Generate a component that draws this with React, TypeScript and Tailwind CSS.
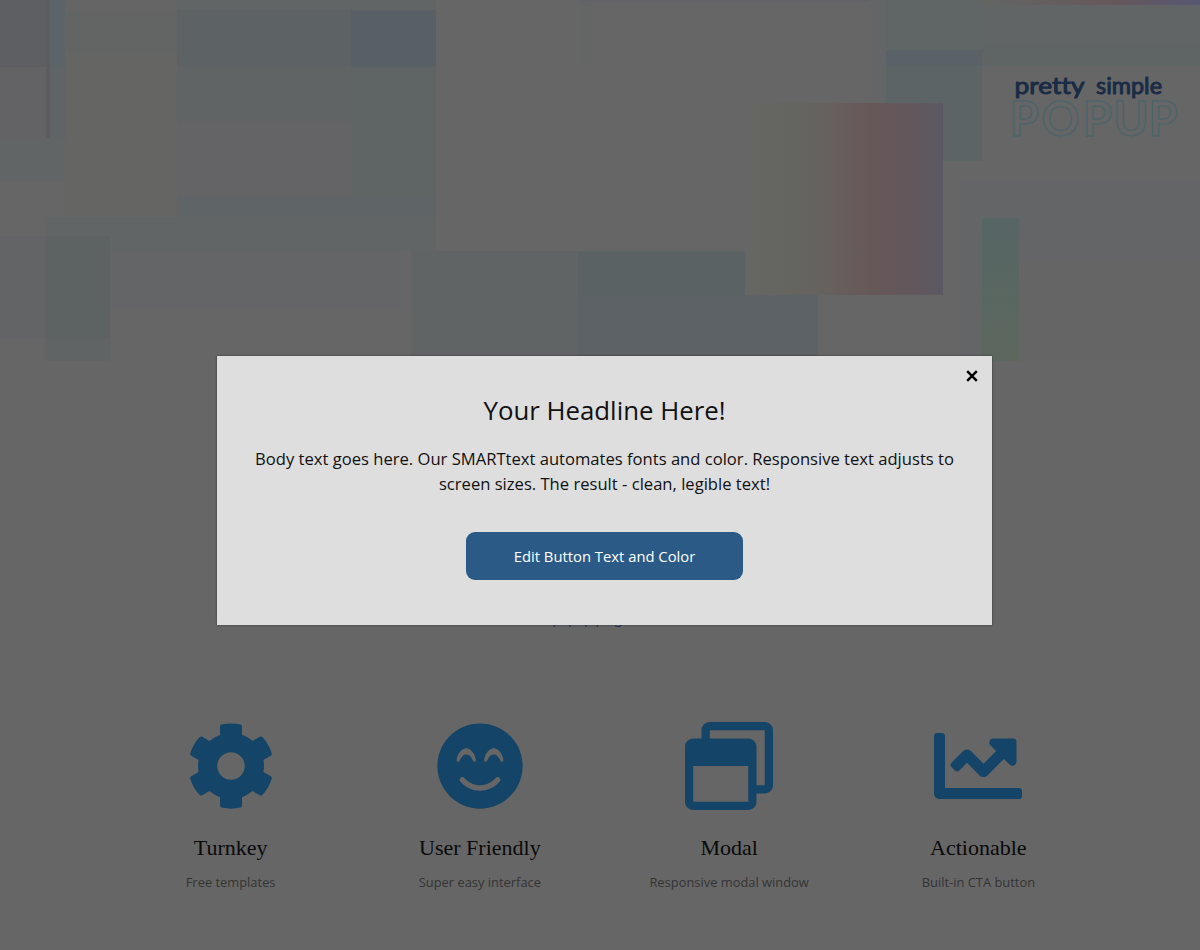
import { FaCog, FaSmileBeam, FaRegWindowRestore, FaChartLine } from "react-icons/fa";

const features = [
  { Icon: FaCog, title: "Turnkey", text: "Free templates" },
  { Icon: FaSmileBeam, title: "User Friendly", text: "Super easy interface" },
  { Icon: FaRegWindowRestore, title: "Modal", text: "Responsive modal window" },
  { Icon: FaChartLine, title: "Actionable", text: "Built-in CTA button" },
];

const patches: [number, number, number, number, string][] = [
  [0, 0, 50, 67, "#5d5f62"], [0, 67, 50, 72, "#636264"], [0, 139, 65, 42, "#626566"],
  [50, 0, 15, 67, "#5b6468"], [50, 67, 15, 72, "#606466"],
  [65, 0, 112, 12, "#656565"], [65, 12, 112, 42, "#636564"], [65, 54, 112, 162, "#656664"],
  [177, 0, 259, 10, "#626565"], [177, 10, 174, 57, "#5d6365"], [177, 67, 174, 55, "#616465"], [177, 122, 174, 74, "#646466"],
  [351, 10, 85, 57, "#586066"], [351, 67, 85, 129, "#5f6465"],
  [177, 196, 259, 21, "#5f6466"], [45, 217, 391, 34, "#626565"], [110, 251, 291, 58, "#646566"],
  [0, 236, 45, 103, "#626465"], [45, 236, 65, 103, "#5c6362"], [45, 339, 65, 22, "#606465"],
  [411, 251, 167, 110, "#606465"], [578, 251, 167, 44, "#5b6263"], [578, 295, 240, 66, "#5c6265"],
  [580, 2, 10, 64, "#646666"], [580, 0, 290, 2, "#606466"],
  [870, 0, 16, 103, "#636566"], [886, 0, 96, 50, "#606566"], [886, 50, 96, 16, "#5a6267"], [886, 66, 96, 95, "#5d6466"],
  [982, 5, 218, 37, "#626565"], [982, 42, 218, 24, "#5f6465"],
  [960, 180, 22, 181, "#646566"], [982, 180, 218, 81, "#646566"], [1020, 261, 180, 100, "#656566"],
];

export default function App() {
  return (
    <div className="relative h-[950px] w-[1200px] overflow-hidden bg-[#666666] font-['Open_Sans','Noto_Sans',sans-serif]">
      <svg className="absolute inset-0" width="1200" height="361" viewBox="0 0 1200 361">
        <defs>
          <linearGradient id="rainbow">
            <stop offset="0" stopColor="#666663" />
            <stop offset="0.2" stopColor="#646560" />
            <stop offset="0.38" stopColor="#66625f" />
            <stop offset="0.62" stopColor="#675858" />
            <stop offset="0.82" stopColor="#63575c" />
            <stop offset="1" stopColor="#5b5863" />
          </linearGradient>
          <linearGradient id="ribbon">
            <stop offset="0" stopColor="#626662" />
            <stop offset="0.6" stopColor="#67575b" />
            <stop offset="1" stopColor="#555773" />
          </linearGradient>
          <linearGradient id="green" x2="0" y2="1">
            <stop offset="0" stopColor="#566665" />
            <stop offset="1" stopColor="#5d675e" />
          </linearGradient>
        </defs>
        {patches.map(([x, y, w, h, fill]) => (
          <rect key={`${x}-${y}`} x={x} y={y} width={w} height={h} fill={fill} />
        ))}
        <rect x="46" y="0" width="4" height="138" fill="#5f5c5f" />
        <rect x="745" y="251" width="5" height="44" fill="#656665" />
        <rect x="750" y="103" width="193" height="192" fill="url(#rainbow)" />
        <rect x="982" y="0" width="218" height="5" fill="url(#ribbon)" />
        <rect x="982" y="218" width="37" height="143" fill="url(#green)" />
      </svg>

      <svg className="absolute left-[1005px] top-[66px] overflow-visible" width="190" height="80" viewBox="0 0 190 80">
        <g fill="none" stroke="#4c646a" strokeWidth="1.4" className="font-['Lato'] text-[47px] font-bold">
          <text x="4.8 36.5 77.8 108.5 143.6" y="69.8">POPUP</text>
        </g>
        <g fill="#192b45" stroke="#192b45" strokeWidth="0.9" strokeLinejoin="round" className="font-['Lato'] text-[22.5px] font-normal [font-variant-ligatures:none]">
          <text x="9.5" y="27.6" textLength="70" lengthAdjust="spacingAndGlyphs">pretty</text>
          <text x="91" y="27.6" textLength="66" lengthAdjust="spacingAndGlyphs">simple</text>
        </g>
      </svg>

      <p className="absolute left-[474px] top-[609px] w-[244px] whitespace-nowrap text-center text-[13px] leading-[20px] text-[#333333]">
        Get the <span className="text-[#1b2560]">free popup plugin</span> from our site
      </p>

      <div className="absolute left-[106px] top-[722px] grid w-[997px] grid-cols-4">
        {features.map(({ Icon, title, text }) => (
          <div key={title} className="flex flex-col items-center">
            <Icon size={88} className="text-[#144467]" />
            <h2 className="mt-[22px] font-['Liberation_Serif',serif] text-[22px] leading-[32px] text-[#0a0a0a]">{title}</h2>
            <p className="mt-[9px] text-[12.9px] leading-[18px] text-[#343434]">{text}</p>
          </div>
        ))}
      </div>

      <section role="dialog" className="absolute left-[217px] top-[356px] flex h-[269px] w-[775px] flex-col items-center bg-[#dedede] text-[#111111] shadow-[0_0_2px_#333333]">
        <button aria-label="Close" className="absolute right-[14px] top-[14px]">
          <svg width="12" height="12" viewBox="0 0 12 12" stroke="#000000" strokeWidth="2.4" fill="none">
            <path d="M1.2 1.2 10.8 10.8M10.8 1.2 1.2 10.8" />
          </svg>
        </button>
        <h1 className="mt-[36px] text-[25.8px] leading-[36px]">Your Headline Here!</h1>
        <p className="mt-[18px] w-[715px] whitespace-nowrap text-center text-[16.6px] leading-[25px]">
          Body text goes here. Our SMARTtext automates fonts and color. Responsive text adjusts to
          <br />
          screen sizes. The result - clean, legible text!
        </p>
        <button className="mt-[36px] h-[48px] w-[277px] rounded-[9px] bg-[#2a5a85] text-[14.8px] text-white">Edit Button Text and Color</button>
      </section>
    </div>
  );
}
